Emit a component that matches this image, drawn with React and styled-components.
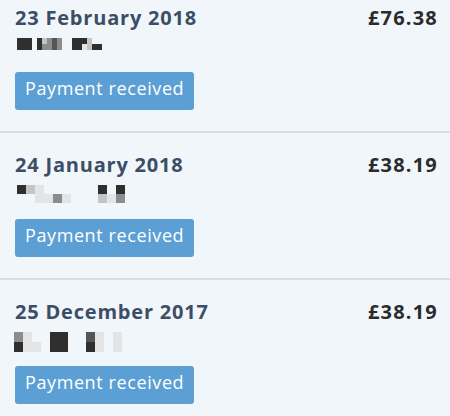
import React from "react";
import styled, { createGlobalStyle } from "styled-components";

const GlobalStyle = createGlobalStyle`
  body {
    margin: 0;
    background: #f1f6fb;
    font-family: "Open Sans", "Liberation Sans", sans-serif;
    overflow: hidden;
  }
`;

const List = styled.div`
  margin-top: -14px;
`;

const Item = styled.div`
  padding: 18px 13px 21px 15px;
  border-bottom: 2px solid #d4dee8;
`;

const Head = styled.div`
  display: flex;
  justify-content: space-between;
  align-items: baseline;
  height: 27px;
`;

const DateText = styled.span`
  font-size: 20px;
  font-weight: 700;
  letter-spacing: 0.8px;
  color: #3c4e66;
`;

const Amount = styled.span`
  font-size: 20px;
  font-weight: 700;
  letter-spacing: 1.2px;
  margin-right: -1px;
  color: #2b2b2b;
`;

const Mosaic = styled.div`
  display: grid;
  grid-template-columns: repeat(${(p) => p.cols}, ${(p) => p.cell}px);
  grid-auto-rows: ${(p) => p.rowH}px;
  height: 18px;
  margin: 7px 0 0 ${(p) => p.offset}px;
  width: max-content;
`;

const Cell = styled.span`
  background: ${(p) => p.shade};
`;

const Badge = styled.div`
  width: fit-content;
  height: 38px;
  box-sizing: border-box;
  margin-top: 16px;
  padding: 4px 10px 0;
  border-radius: 3px;
  background: #5b9fd4;
  color: #fff;
  font-size: 18px;
  letter-spacing: 0.6px;
  line-height: 24px;
`;

const shades = {
  d: "#2f2f2f",
  m: "#555",
  g: "#8c8c8c",
  l: "#c4c4c4",
  f: "#e2e4e6",
  _: "transparent",
};

const payments = [
  {
    date: "23 February 2018",
    amount: "£76.38",
    mosaic: {
      cell: 5,
      rowH: 6,
      offset: 2,
      rows: ["ddd_dlgmg__dddl__", "ddd_dggmg__ddfldd"],
    },
  },
  {
    date: "24 January 2018",
    amount: "£38.19",
    mosaic: {
      cell: 9,
      rowH: 9,
      offset: 2,
      rows: ["dlf______d_d", "__ffgf___lfg"],
    },
  },
  {
    date: "25 December 2017",
    amount: "£38.19",
    mosaic: {
      cell: 9,
      rowH: 10,
      offset: -1,
      rows: ["gf__dd__mf_f", "dff_dd__df_f"],
    },
  },
];

function Redacted({ data }) {
  const cols = data.rows[0].length;
  return (
    <Mosaic cols={cols} cell={data.cell} rowH={data.rowH} offset={data.offset}>
      {data.rows.map((row, r) =>
        row.split("").map((c, i) => <Cell key={r + "-" + i} shade={shades[c]} />)
      )}
    </Mosaic>
  );
}

export default function App() {
  return (
    <>
      <GlobalStyle />
      <List>
        {payments.map((p) => (
          <Item key={p.date}>
            <Head>
              <DateText>{p.date}</DateText>
              <Amount>{p.amount}</Amount>
            </Head>
            <Redacted data={p.mosaic} />
            <Badge>Payment received</Badge>
          </Item>
        ))}
      </List>
    </>
  );
}
